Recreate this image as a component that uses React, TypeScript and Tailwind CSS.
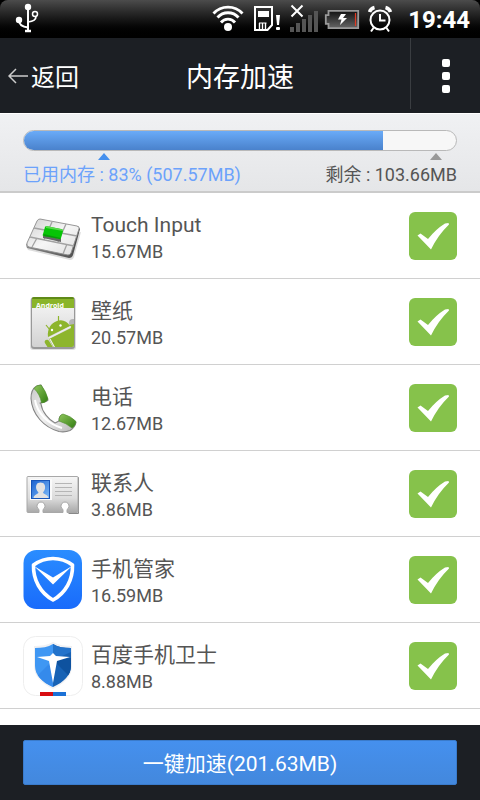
import { useState } from 'react'
import type { ReactNode } from 'react'

type AppItem = {
  id: string
  name: string
  size: string
  icon: ReactNode
}

/* Status bar icons */

function UsbIcon() {
  return (
    <svg className="w-8 h-[38px]" viewBox="0 0 32 38" fill="none" stroke="#fff" strokeWidth="2">
      <circle cx="16" cy="7" r="3.200" fill="#fff" stroke="none" />
      <path d="M16 7V31" />
      <path d="M13 31h6" strokeWidth="2.500" />
      <circle cx="7" cy="20" r="3.200" fill="#fff" stroke="none" />
      <path d="M7 20c0 5 4 7 9 7.500" />
      <circle cx="23" cy="14" r="2.500" strokeWidth="1.500" />
      <path d="M24 16.500c0 3-3 5-8 5.500" strokeWidth="1.700" />
    </svg>
  )
}

function WifiIcon() {
  return (
    <svg className="w-8 h-[38px]" viewBox="0 0 32 38" fill="none" stroke="#fff" strokeWidth="2.800">
      <circle cx="16" cy="27" r="4" fill="#fff" stroke="none" />
      <path d="M9 22.500a9 9 0 0 1 14 0" />
      <path d="M5.500 17.500a14 14 0 0 1 21 0" />
      <path d="M1.500 13.500a19.500 19.500 0 0 1 29 0" />
    </svg>
  )
}

function SimIcon() {
  return (
    <svg className="w-[34px] h-[38px]" viewBox="0 0 34 38">
      <path d="M7 7h17v18l-4.500 5H7z" fill="none" stroke="#fff" strokeWidth="2" />
      <rect x="10" y="11" width="11" height="6" fill="#fff" />
      <path d="M11.500 23v6M14.500 23v6M17.500 23v6" stroke="#fff" strokeWidth="1.400" />
      <path d="M11 23h7.500" stroke="#fff" strokeWidth="1" />
      <path d="M28 15h4l-1 10h-2z" fill="#fff" />
      <rect x="28" y="27" width="4" height="3" rx="1" fill="#fff" />
    </svg>
  )
}

function SignalIcon() {
  return (
    <svg className="w-[34px] h-[38px]" viewBox="0 0 34 38">
      <path
        d="M4 27h4v5H4zM10 23h4v9h-4zM16 19h4v13h-4zM22 15h4v17h-4zM28 11h4v21h-4z"
        fill="#555"
      />
      <path d="M5.500 5.500l11 11M16.500 5.500l-11 11" stroke="#fff" strokeWidth="2" />
    </svg>
  )
}

function BatteryIcon() {
  return (
    <svg className="w-9 h-[38px]" viewBox="0 0 36 38">
      <defs>
        <linearGradient id="battery-fill" x1="0" y1="0" x2="0" y2="1">
          <stop offset="0" stopColor="#111" />
          <stop offset="1" stopColor="#666" />
        </linearGradient>
      </defs>
      <path
        d="M4.500 10.800h29.700v17.400H4.500v-4.400H1.800v-8.600h2.700z"
        fill="url(#battery-fill)"
        stroke="#999"
        strokeWidth="1.800"
      />
      <path d="M31.500 13v13" stroke="#e03a22" strokeWidth="1.200" />
      <path d="M17 14h5l-3 4h4l-7 7 1.500-5.500h-3.500z" fill="#fff" />
    </svg>
  )
}

function AlarmIcon() {
  return (
    <svg className="w-8 h-[38px]" viewBox="0 0 32 38" fill="none" stroke="#fff" strokeWidth="2">
      <circle cx="16" cy="20" r="9.500" />
      <path d="M16 14v6.500h5.500" />
      <path d="M5.500 12a7 7 0 0 1 5-4.500M26.500 12a7 7 0 0 0-5-4.500" strokeWidth="3.500" />
      <path d="M9.500 28l-2.500 3.500M22.500 28l2.500 3.500" />
    </svg>
  )
}

/* App icons */

function KeyboardIcon() {
  return (
    <svg className="w-[60px] h-[60px]" viewBox="0 0 60 60">
      <defs>
        <linearGradient id="kb-top" x1="0" y1="0" x2="1" y2="1">
          <stop offset="0" stopColor="#d0d0d0" />
          <stop offset="0.5" stopColor="#f6f6f6" />
          <stop offset="1" stopColor="#dedede" />
        </linearGradient>
        <linearGradient id="kb-side" x1="0" y1="0" x2="1" y2="0">
          <stop offset="0" stopColor="#888" />
          <stop offset="1" stopColor="#4c4c4c" />
        </linearGradient>
      </defs>
      <path d="M3 40l2 4 42 10q3 0 4-3l7-25z" fill="#aaa" opacity="0.400" />
      <path d="M3 38l1 4 42 10q3 0 4-3l7-26-2-3z" fill="url(#kb-side)" />
      <path
        d="M17 13l37 7q3 1 2 3l-8 24q-1 2-3 2L6 41q-3-1-2-4l10-22q1-2 3-2z"
        fill="url(#kb-top)"
        stroke="#8c8c8c"
        strokeWidth="0.900"
      />
      <path
        d="M11 22l43 8M7 31l44 9M29 16l-8 18M43 18l-8 18M14 32l-5 9M44 38l-4 10"
        stroke="#a2a2a2"
        strokeWidth="1.300"
        fill="none"
      />
      <path d="M20 29l18 4v3l-18-4z" fill="#666" />
      <path d="M23 20l15 3q2 0 2 2l-2 7q0 2-2 1l-15-3q-2 0-1-2l2-7z" fill="#06c506" />
      <path d="M23 20l15 3q2 0 2 2l-17-3z" fill="#57d94b" />
      <path d="M20.500 28l17 4-.5 1-16-3z" fill="#0a970a" />
    </svg>
  )
}

function WallpaperIcon() {
  return (
    <svg className="w-[60px] h-[60px]" viewBox="0 0 60 60">
      <defs>
        <linearGradient id="wp-page" x1="0" y1="0" x2="0" y2="1">
          <stop offset="0" stopColor="#f8f8f8" />
          <stop offset="1" stopColor="#d2d2d2" />
        </linearGradient>
        <clipPath id="wp-clip">
          <rect x="9" y="5" width="42" height="50" rx="2" />
        </clipPath>
      </defs>
      <rect x="7" y="6" width="46" height="52" rx="3" fill="#999" opacity="0.300" />
      <rect x="8" y="5" width="44" height="52" rx="3" fill="#999" />
      <g clipPath="url(#wp-clip)">
        <rect x="9" y="5" width="42" height="50" fill="url(#wp-page)" />
        <rect x="9" y="5" width="42" height="11" fill="#8ab52a" />
        <rect x="9" y="5" width="42" height="2" fill="#5f8a18" />
        <text
          x="13"
          y="16"
          fontSize="7"
          fontWeight="700"
          fill="#fff"
          fontFamily="'Open Sans', sans-serif"
        >
          Android
        </text>
        <circle cx="50" cy="31" r="4" fill="#b5b5b5" />
        <path d="M25 45c-1-8 3-14 9-16 5-2 10 0 13 5z" fill="#8db52c" />
        <path d="M26 47l22-11 5 0v20H31z" fill="#8db52c" />
        <path d="M46 33l5-1v8z" fill="#8db52c" />
        <path d="M23 33l4 5M35.500 24v6" stroke="#8db52c" strokeWidth="1.200" />
        <path d="M24 50l5 8" stroke="#8db52c" strokeWidth="4.500" strokeLinecap="round" />
        <circle cx="29" cy="38" r="1.200" fill="#fff" />
        <circle cx="37.500" cy="33.500" r="1.200" fill="#fff" />
        <path d="M26 46l22-11.500M27 47l6 11" stroke="#eee" strokeWidth="1.200" />
      </g>
    </svg>
  )
}

function PhoneIcon() {
  return (
    <svg className="w-[60px] h-[60px]" viewBox="0 0 60 60">
      <defs>
        <linearGradient id="ph-body" x1="0" y1="0" x2="1" y2="1">
          <stop offset="0" stopColor="#c8c8c8" />
          <stop offset="0.5" stopColor="#f2f2f2" />
          <stop offset="1" stopColor="#b5b5b5" />
        </linearGradient>
        <linearGradient id="ph-pad" x1="0" y1="0" x2="1" y2="1">
          <stop offset="0" stopColor="#8fc65c" />
          <stop offset="1" stopColor="#327d12" />
        </linearGradient>
      </defs>
      <path
        d="M13 8.500q-5 3-5 12c1 16 13 29 28 33q6 1 11-1 5-3 6-8L39 37q-3 1-3 6l-4 2C26 42 19 34 18 26l-1-1q6-1 8-3L18 7q-3 0-5 1.500z"
        fill="url(#ph-body)"
        stroke="#858585"
        strokeWidth="1.100"
        strokeLinejoin="round"
      />
      <path
        d="M11 10.500q2-3.500 7-3.500 5 6 7 14-2 4-6.500 4-1.500-9-7.500-14.500z"
        fill="url(#ph-pad)"
        stroke="#4d8b2b"
        strokeWidth="0.600"
      />
      <path
        d="M36 43q0-6 4-7 8 2 13 7.500-1 5-4 6.500-6-5-13-7z"
        fill="url(#ph-pad)"
        stroke="#4d8b2b"
        strokeWidth="0.600"
      />
      <path d="M12 22c2 13 13 24 27 28" fill="none" stroke="#fff" strokeWidth="2" />
    </svg>
  )
}

function ContactsIcon() {
  return (
    <svg className="w-[60px] h-[60px]" viewBox="0 0 60 60">
      <defs>
        <linearGradient id="ct-card" x1="0" y1="0" x2="0" y2="1">
          <stop offset="0" stopColor="#f6f6f6" />
          <stop offset="0.600" stopColor="#dcdcdc" />
          <stop offset="1" stopColor="#a8a8a8" />
        </linearGradient>
        <linearGradient id="ct-photo" x1="0" y1="0" x2="1" y2="1">
          <stop offset="0" stopColor="#1b62cf" />
          <stop offset="1" stopColor="#7ebcfa" />
        </linearGradient>
      </defs>
      <path d="M54.500 13.500h1v36h-10" stroke="#888" strokeWidth="1" fill="none" />
      <path
        d="M5 12.500h49q1 0 1 1v34q0 1-1 1H44v-3a4 4 0 1 0-4 0v3H20v-3a4 4 0 1 0-4 0v3H5q-1 0-1-1v-34q0-1 1-1z"
        fill="url(#ct-card)"
        stroke="#a8a8a8"
        strokeWidth="1"
      />
      <rect x="7" y="15" width="22" height="21" fill="#fafafa" />
      <rect x="8.500" y="16.500" width="18" height="18" fill="url(#ct-photo)" stroke="#1755b8" strokeWidth="1" />
      <path
        d="M17.500 18.500c4 0 5 3 4.500 6-.3 2-1.500 3-2 4 1 2 5 2 5.500 5.500h-15c.5-3.500 4-3.500 5-5.500-.5-1-2-2-2.300-4-.4-3 .3-6 4.300-6z"
        fill="#e2e2e2"
      />
      <path d="M32 19.500h17M32 23.500h17M32 27.500h17M32 31.500h17" stroke="#b5b5b5" strokeWidth="1.200" />
    </svg>
  )
}

function ManagerIcon() {
  return (
    <svg className="w-[60px] h-[60px]" viewBox="0 0 60 60">
      <defs>
        <linearGradient id="mg-bg" x1="0" y1="0" x2="0" y2="1">
          <stop offset="0" stopColor="#2a8dff" />
          <stop offset="1" stopColor="#196bfb" />
        </linearGradient>
      </defs>
      <rect x="0.500" y="0" width="58.500" height="59" rx="13" fill="url(#mg-bg)" />
      <path
        d="M30 8.500c7 0 14 2.500 19.500 6.500.5 15-7 28-19.500 35C17.500 43 10 30 10.500 15 16 11 23 8.500 30 8.500z"
        fill="none"
        stroke="#fff"
        strokeWidth="3.600"
        strokeLinejoin="round"
      />
      <path d="M11 16l19 11.500L49 16 30 34.500z" fill="#fff" />
    </svg>
  )
}

function GuardIcon() {
  return (
    <svg className="w-[60px] h-[60px]" viewBox="0 0 60 60">
      <defs>
        <clipPath id="gd-shield">
          <path d="M30 8c5 3 11 4 18 4v18c0 9-7 16-18 21-11-5-18-12-18-21V12c7 0 13-1 18-4z" />
        </clipPath>
      </defs>
      <rect x="0.500" y="0.500" width="59" height="59" rx="12" fill="#fff" stroke="#eee" />
      <path
        d="M30 6c6 3 12 4 19 4v20c0 10-7 17-19 23-12-6-19-13-19-23V10c7 0 13-1 19-4z"
        fill="#f1f1f3"
      />
      <g clipPath="url(#gd-shield)">
        <path d="M12 6h18v46H12z" fill="#3f97f3" />
        <path d="M30 6h18v46H30z" fill="#1762b5" />
        <path d="M30 24L12 42v12h18z" fill="#358aeb" />
        <path d="M30 24l18-8V6H30z" fill="#2373cb" />
        <path d="M30 24l18 18V22z" fill="#0e529f" />
      </g>
      <path d="M30 17l3 3 14 1-13 4-4 22-4-22-12-4 13-1z" fill="#fff" />
      <rect x="17" y="56" width="13" height="4" fill="#d80d11" />
      <rect x="30" y="56" width="13" height="4" fill="#1b71d6" />
    </svg>
  )
}

const APPS: AppItem[] = [
  { id: 'touch-input', name: 'Touch Input', size: '15.67MB', icon: <KeyboardIcon /> },
  { id: 'wallpaper', name: '壁纸', size: '20.57MB', icon: <WallpaperIcon /> },
  { id: 'phone', name: '电话', size: '12.67MB', icon: <PhoneIcon /> },
  { id: 'contacts', name: '联系人', size: '3.86MB', icon: <ContactsIcon /> },
  { id: 'manager', name: '手机管家', size: '16.59MB', icon: <ManagerIcon /> },
  { id: 'guard', name: '百度手机卫士', size: '8.88MB', icon: <GuardIcon /> },
]

function StatusBar() {
  return (
    <div className="bg-black shrink-0">
      <div className="h-[38px] rounded-t-lg bg-linear-to-b from-[#4c4c4c] to-black flex items-center pl-3 pr-2.5 gap-1">
        <UsbIcon />
        <div className="flex-1" />
        <WifiIcon />
        <SimIcon />
        <SignalIcon />
        <BatteryIcon />
        <AlarmIcon />
        <span className="ml-2 pt-0.5 text-2xl font-bold text-white">19:44</span>
      </div>
    </div>
  )
}

function Header() {
  return (
    <header className="h-[75px] bg-[#1c1f24] text-white grid grid-cols-[1fr_auto_1fr] items-center shrink-0">
      <button className="flex items-center gap-[3px] pl-2 text-2xl h-full">
        <svg className="w-5 h-4" viewBox="0 0 20 16" fill="none" stroke="#ccc" strokeWidth="1.500">
          <path d="M20 8H1M8 1L1 8l7 7" />
        </svg>
        <span className="pt-1">返回</span>
      </button>
      <h1 className="text-[27px] pt-1.5">内存加速</h1>
      <button
        aria-label="更多"
        className="justify-self-end h-[71px] w-[70px] border-l border-[#3a3d41] flex items-center justify-center self-start pt-1"
      >
        <svg className="w-2 h-9" viewBox="0 0 8 36" fill="#fff">
          <rect y="1" width="8" height="8" rx="2" />
          <rect y="14" width="8" height="8" rx="2" />
          <rect y="27" width="8" height="8" rx="2" />
        </svg>
      </button>
    </header>
  )
}

function MemoryPanel({ percent }: { percent: number }) {
  return (
    <section className="h-20 px-[23px] pt-4 bg-linear-to-b from-[#f0f1f3] to-[#e5e6e8] border-t border-t-white border-b-2 border-b-[#cbcbcb] shrink-0">
      <div className="h-[21px] rounded-full border border-[#b9b9b9] bg-[#f7f7f7] overflow-hidden">
        <div
          className="h-full bg-linear-to-b from-[#6aabf8] to-[#4a82cc]"
          style={{ width: `${percent}%` }}
        />
      </div>

      {/* Markers above the two labels */}
      <div className="flex justify-between pl-[75px] pr-[15px] pt-[2px]">
        <svg className="w-3 h-[7px]" viewBox="0 0 12 7" fill="#4590ee">
          <path d="M6 0l6 7H0z" />
        </svg>
        <svg className="w-3 h-[7px]" viewBox="0 0 12 7" fill="#999">
          <path d="M6 0l6 7H0z" />
        </svg>
      </div>

      <div className="flex justify-between text-lg leading-[30px]">
        <span className="text-[#6ca2fb]">已用内存 : {percent}% (507.57MB)</span>
        <span className="text-[#555]">剩余 : 103.66MB</span>
      </div>
    </section>
  )
}

function AppRow({ app, checked, onToggle }: { app: AppItem; checked: boolean; onToggle: () => void }) {
  return (
    <li className="h-[86px] border-b border-[#d0d0d0]">
      <label className="h-full flex items-center px-[23px] gap-2 cursor-pointer">
        {app.icon}
        <span className="flex-1 pt-1 text-[#555]">
          <span className="block text-[21px] leading-7">{app.name}</span>
          <span className="block text-lg leading-[26px]">{app.size}</span>
        </span>
        <span className="relative w-12 h-12">
          <input
            type="checkbox"
            checked={checked}
            onChange={onToggle}
            className="peer appearance-none block w-12 h-12 rounded-md bg-[#d4d4d4] checked:bg-[#86c24b]"
          />
          <svg
            className="absolute inset-0 w-12 h-12 pointer-events-none invisible peer-checked:visible"
            viewBox="0 0 48 48"
            fill="#fff"
          >
            <path d="M8.500 23.500l3-2 7.500 5.500q8-10 17-15.500l3.500-.5.500 1.500Q29 23 22 37.500z" />
          </svg>
        </span>
      </label>
    </li>
  )
}

export default function App() {
  const [selected, setSelected] = useState<string[]>(APPS.map((a) => a.id))

  const toggle = (id: string) =>
    setSelected((prev) => (prev.includes(id) ? prev.filter((x) => x !== id) : [...prev, id]))

  return (
    <div className="h-screen flex flex-col bg-white font-[Roboto,'Noto_Sans_CJK_SC',sans-serif]">
      <StatusBar />
      <Header />
      <MemoryPanel percent={83} />

      <ul className="flex-1 min-h-0 overflow-y-auto">
        {APPS.map((app) => (
          <AppRow
            key={app.id}
            app={app}
            checked={selected.includes(app.id)}
            onToggle={() => toggle(app.id)}
          />
        ))}
      </ul>

      <footer className="h-[75px] px-[23px] bg-[#1c1f24] flex items-center shrink-0">
        <button className="w-full h-[45px] pt-1 rounded-xs bg-linear-to-b from-[#4590ee] to-[#4388dd] border border-[#3a7bcb] text-[21px] text-white">
          一键加速(201.63MB)
        </button>
      </footer>
    </div>
  )
}
